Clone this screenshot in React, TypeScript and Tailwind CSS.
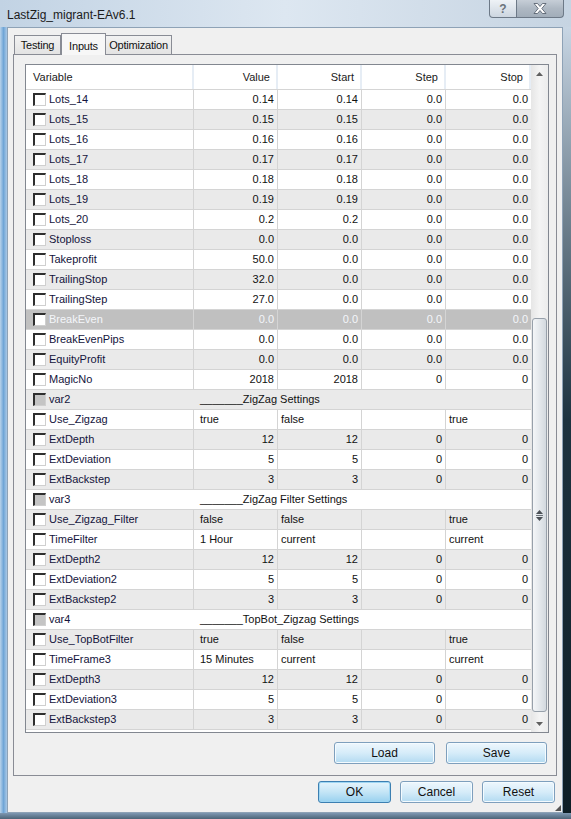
import React from 'react';

type Row = {
  name: string;
  kind?: 'num' | 'text' | 'sep' | 'off';
  v?: string;
  start?: string;
  step?: string;
  stop?: string;
};

const rows: Row[] = [
  { name: 'Lots_14', v: '0.14', start: '0.14', step: '0.0', stop: '0.0' },
  { name: 'Lots_15', v: '0.15', start: '0.15', step: '0.0', stop: '0.0' },
  { name: 'Lots_16', v: '0.16', start: '0.16', step: '0.0', stop: '0.0' },
  { name: 'Lots_17', v: '0.17', start: '0.17', step: '0.0', stop: '0.0' },
  { name: 'Lots_18', v: '0.18', start: '0.18', step: '0.0', stop: '0.0' },
  { name: 'Lots_19', v: '0.19', start: '0.19', step: '0.0', stop: '0.0' },
  { name: 'Lots_20', v: '0.2', start: '0.2', step: '0.0', stop: '0.0' },
  { name: 'Stoploss', v: '0.0', start: '0.0', step: '0.0', stop: '0.0' },
  { name: 'Takeprofit', v: '50.0', start: '0.0', step: '0.0', stop: '0.0' },
  { name: 'TrailingStop', v: '32.0', start: '0.0', step: '0.0', stop: '0.0' },
  { name: 'TrailingStep', v: '27.0', start: '0.0', step: '0.0', stop: '0.0' },
  { name: 'BreakEven', kind: 'off', v: '0.0', start: '0.0', step: '0.0', stop: '0.0' },
  { name: 'BreakEvenPips', v: '0.0', start: '0.0', step: '0.0', stop: '0.0' },
  { name: 'EquityProfit', v: '0.0', start: '0.0', step: '0.0', stop: '0.0' },
  { name: 'MagicNo', v: '2018', start: '2018', step: '0', stop: '0' },
  { name: 'var2', kind: 'sep', v: '_______ZigZag Settings' },
  { name: 'Use_Zigzag', kind: 'text', v: 'true', start: 'false', step: '', stop: 'true' },
  { name: 'ExtDepth', v: '12', start: '12', step: '0', stop: '0' },
  { name: 'ExtDeviation', v: '5', start: '5', step: '0', stop: '0' },
  { name: 'ExtBackstep', v: '3', start: '3', step: '0', stop: '0' },
  { name: 'var3', kind: 'sep', v: '_______ZigZag Filter Settings' },
  { name: 'Use_Zigzag_Filter', kind: 'text', v: 'false', start: 'false', step: '', stop: 'true' },
  { name: 'TimeFilter', kind: 'text', v: '1 Hour', start: 'current', step: '', stop: 'current' },
  { name: 'ExtDepth2', v: '12', start: '12', step: '0', stop: '0' },
  { name: 'ExtDeviation2', v: '5', start: '5', step: '0', stop: '0' },
  { name: 'ExtBackstep2', v: '3', start: '3', step: '0', stop: '0' },
  { name: 'var4', kind: 'sep', v: '_______TopBot_Zigzag Settings' },
  { name: 'Use_TopBotFilter', kind: 'text', v: 'true', start: 'false', step: '', stop: 'true' },
  { name: 'TimeFrame3', kind: 'text', v: '15 Minutes', start: 'current', step: '', stop: 'current' },
  { name: 'ExtDepth3', v: '12', start: '12', step: '0', stop: '0' },
  { name: 'ExtDeviation3', v: '5', start: '5', step: '0', stop: '0' },
  { name: 'ExtBackstep3', v: '3', start: '3', step: '0', stop: '0' },
];

const cols = 'grid grid-cols-[168px_84px_84px_84px_85px]';

function Check({ gray }: { gray?: boolean }) {
  return (
    <span
      className={`w-[13px] h-[13px] shrink-0 border-t-2 border-l-2 border-r border-b border-t-[#2e2e2e] border-l-[#2e2e2e] border-r-[#cfcfcf] border-b-[#cfcfcf] ${
        gray ? 'bg-[#c4c4c4]' : 'bg-white'
      }`}
    />
  );
}

function Cell({ text, align, first, last }: { text?: string; align: 'r' | 'l'; first?: boolean; last?: boolean }) {
  return (
    <div
      className={`flex items-center overflow-hidden whitespace-nowrap ${last ? '' : 'border-r border-[#d4d4d4]'} ${
        align === 'r' ? 'justify-end pr-[3px]' : first ? 'pl-[6px]' : 'pl-[3px]'
      }`}
    >
      {text}
    </div>
  );
}

function TableRow({ row, i }: { row: Row; i: number }) {
  const off = row.kind === 'off';
  const bg = off ? 'bg-[#c0c0c0] text-[#f4f6fa]' : i % 2 ? 'bg-[#eaeaea]' : 'bg-white';
  const align = row.kind === 'text' ? 'l' : 'r';
  return (
    <div className={`${cols} h-[20px] border-b border-[#d4d4d4] ${bg}`}>
      <div
        className={`flex items-center gap-[3px] pl-[7px] ${row.kind === 'sep' ? '' : 'border-r border-[#d4d4d4]'} ${
          off ? '' : 'text-[#14143c]'
        }`}
      >
        <Check gray={row.kind === 'sep'} />
        <span>{row.name}</span>
      </div>
      {row.kind === 'sep' ? (
        <div className="col-span-4 flex items-center pl-[6px] whitespace-nowrap text-[#111]">{row.v}</div>
      ) : (
        <>
          <Cell text={row.v} align={align} first />
          <Cell text={row.start} align={align} />
          <Cell text={row.step} align={align} />
          <Cell text={row.stop} align={align} last />
        </>
      )}
    </div>
  );
}

function Arrow({ up }: { up?: boolean }) {
  return (
    <div className="h-[17px] flex items-center justify-center">
      <svg width="7" height="4" viewBox="0 0 7 4">
        <path d={up ? 'M0 4 L3.5 0 L7 4 Z' : 'M0 0 L3.5 4 L7 0 Z'} fill="#606060" />
      </svg>
    </div>
  );
}

function Scrollbar() {
  return (
    <div className="w-[17px] flex flex-col bg-gradient-to-r from-[#e6e6e6] via-[#f4f4f4] to-[#ececec]">
      <Arrow up />
      <div className="flex-1" />
      <div className="h-[394px] mx-[1px] rounded-[3px] border border-[#97a0aa] bg-gradient-to-r from-[#f4f6f8] via-[#e4e8ec] to-[#d3d9df] flex items-center justify-center">
        <svg width="9" height="11" viewBox="0 0 9 11">
          <path d="M4.5 0 L8 4 L1 4 Z M4.5 11 L8 7 L1 7 Z" fill="#4a4f55" />
          <rect x="1" y="5" width="7" height="1" fill="#6c737a" />
        </svg>
      </div>
      <div className="h-[3px]" />
      <Arrow />
    </div>
  );
}

function Button({ label, w, primary }: { label: string; w: string; primary?: boolean }) {
  return (
    <div
      className={`${w} h-[22px] rounded-[3px] border flex items-center justify-center text-[12px] text-[#111] ${
        primary
          ? 'border-[#3c7fb1] bg-gradient-to-b from-[#e5f4fc] via-[#c4e5f6] to-[#98d1ef] shadow-[inset_0_0_0_1px_#9ed6f3]'
          : 'border-[#7e9fbd] bg-gradient-to-b from-[#eef7fd] via-[#d6ecf9] to-[#b2daf1] shadow-[inset_0_0_0_1px_#f4fbff]'
      }`}
    >
      {label}
    </div>
  );
}

export default function App() {
  return (
    <div className="w-[571px] h-[819px] flex flex-col overflow-hidden font-['Liberation_Sans',Arial,sans-serif] bg-[#b9cde0]">
      {/* Title bar */}
      <div className="h-[27px] shrink-0 flex items-start justify-between bg-gradient-to-r from-[#c2d3e4] via-[#dde7f1] to-[#c6d4e2]">
        <span className="pl-[7px] pt-[6px] text-[12px] text-[#1b1b1b]">LastZig_migrant-EAv6.1</span>
        <div className="flex mr-[7px]">
          <div className="w-[28px] h-[18px] rounded-bl-[4px] border border-t-0 border-[#6d7987] bg-gradient-to-b from-[#eef2f6] to-[#cdd6e0] flex items-center justify-center text-[12px] font-bold text-[#6b737c]">
            ?
          </div>
          <div className="w-[47px] h-[18px] rounded-br-[4px] border border-t-0 border-l-0 border-[#6d7987] bg-gradient-to-b from-[#c6ced7] via-[#aeb8c3] to-[#a2adb9] flex items-center justify-center">
            <svg width="14" height="11" viewBox="0 0 14 11">
              <path
                d="M1 0.5 H4.5 L7 3.5 L9.5 0.5 H13 L8.8 5.5 L13 10.5 H9.5 L7 7.5 L4.5 10.5 H1 L5.2 5.5 Z"
                fill="#ffffff"
                stroke="#4b5663"
                strokeWidth="0.8"
              />
            </svg>
          </div>
        </div>
      </div>

      <div className="flex flex-1">
        <div className="w-[7px] bg-gradient-to-r from-[#b8d2ea] via-[#6fa5d6] to-[#a9c8e6]" />

        {/* Client */}
        <div className="relative w-[556px] h-[786px] flex flex-col bg-[#f0f0f0] border border-[#8ea2b6]">
          {/* Tabs */}
          <div className="h-[26px] flex items-end pl-[6px] text-[11px] tracking-[-0.2px] text-[#111]">
            <div className="w-[47px] h-[19px] border border-b-0 border-[#898c95] bg-gradient-to-b from-[#f2f2f2] to-[#e3e3e3] flex items-center justify-center">
              Testing
            </div>
            <div className="w-[45px] h-[22px] -mb-[1px] z-10 border border-b-0 border-[#898c95] bg-[#f7f7f7] flex items-start pt-[4px] justify-center">
              Inputs
            </div>
            <div className="w-[66px] h-[19px] border border-b-0 border-l-0 border-[#898c95] bg-gradient-to-b from-[#f2f2f2] to-[#e3e3e3] flex items-center justify-center">
              Optimization
            </div>
          </div>

          {/* Tab page */}
          <div className="mx-[5px] h-[722px] border border-[#898c95] bg-[#f0f0f0] flex flex-col pt-[9px] pl-[11px] pr-[7px]">
            <div className="h-[669px] w-[524px] border border-[#828790] bg-white flex text-[11px] text-[#111]">
              <div className="flex-1 flex flex-col overflow-hidden">
                <div className={`${cols} h-[25px] border-b border-[#d5d5d5] bg-white text-[#1a1a1a]`}>
                  <div className="flex items-center pl-[7px] border-r-2 border-[#e6edf5]">Variable</div>
                  <div className="flex items-center justify-end pr-[6px] border-r-2 border-[#e6edf5]">Value</div>
                  <div className="flex items-center justify-end pr-[6px] border-r-2 border-[#e6edf5]">Start</div>
                  <div className="flex items-center justify-end pr-[6px] border-r-2 border-[#e6edf5]">Step</div>
                  <div className="flex items-center justify-end pr-[6px] border-r-2 border-[#e6edf5]">Stop</div>
                </div>
                {rows.map((r, i) => (
                  <TableRow key={r.name} row={r} i={i} />
                ))}
              </div>
              <Scrollbar />
            </div>
            <div className="flex justify-end gap-[11px] pt-[9px] pr-[2px]">
              <Button label="Load" w="w-[101px]" />
              <Button label="Save" w="w-[101px]" />
            </div>
          </div>

          {/* Dialog buttons */}
          <div className="flex justify-end gap-[9px] pt-[5px] pr-[7px]">
            <Button label="OK" w="w-[73px]" primary />
            <Button label="Cancel" w="w-[73px]" />
            <Button label="Reset" w="w-[73px]" />
          </div>

          <svg className="absolute right-[1px] bottom-[1px]" width="6" height="6" viewBox="0 0 6 6">
            <path d="M6 0 L6 6 L0 6 Z" fill="#555" />
          </svg>
        </div>

        <div className="flex-1 bg-gradient-to-b from-[#c8d6e4] via-[#1d3340] to-[#0e1e26]" />
      </div>
      <div className="h-[6px] bg-gradient-to-b from-[#7e98b2] to-[#4d6478]" />
    </div>
  );
}
